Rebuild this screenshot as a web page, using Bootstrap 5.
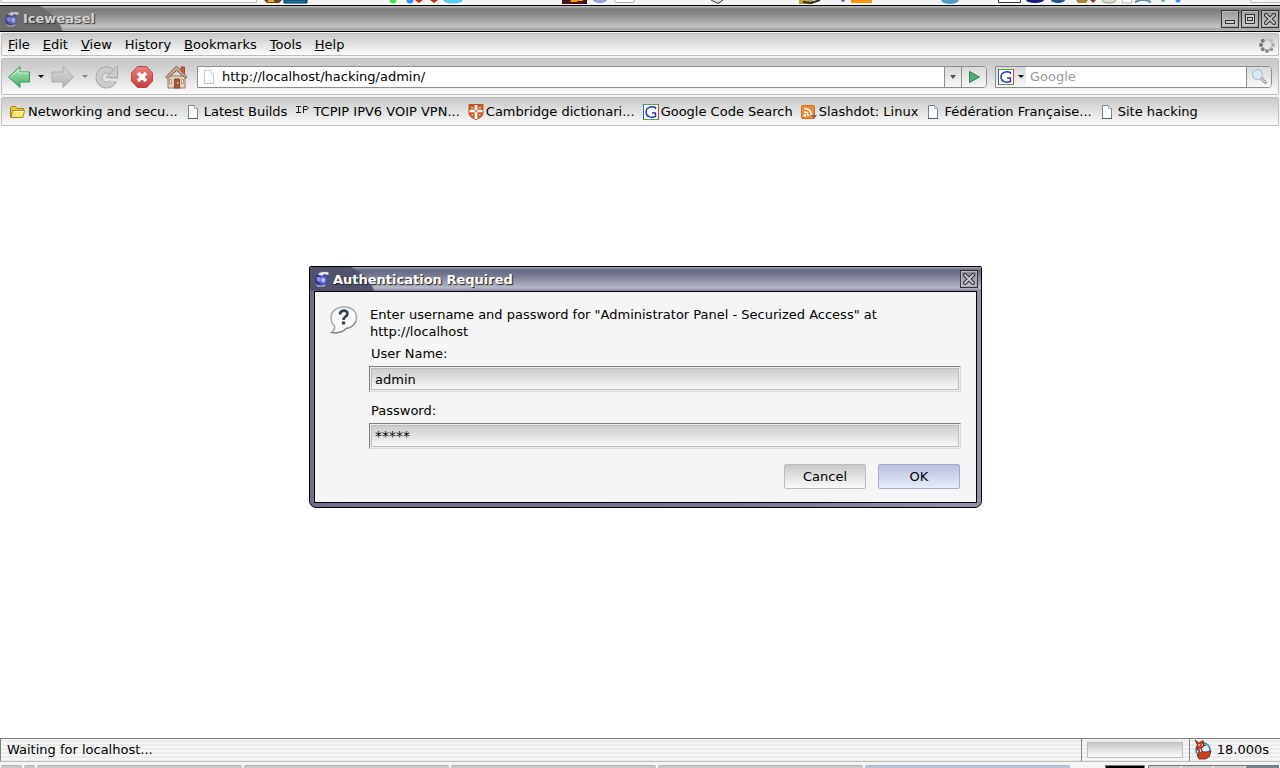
<!DOCTYPE html>
<html lang="en">
<head>
<meta charset="utf-8">
<meta name="viewport" content="width=device-width, initial-scale=1">
<title>Iceweasel</title>
<link href="https://cdn.jsdelivr.net/npm/bootstrap@5.3.0/dist/css/bootstrap.min.css" rel="stylesheet">
<style>
:root { --silver: linear-gradient(#c9c9c9, #fbfbfb); --edge: #bdbdbd; }
body { font-family: "DejaVu Sans", sans-serif; font-size: 13px; line-height: 17px; color: #000; background: #fff; }
a, a:hover { color: inherit; text-decoration: none; }
button { padding: 0; border: 0; background: none; color: inherit; }
svg { display: block; flex: none; }
.desk-top { height: 5px; background: #f4f4f4; overflow: hidden; }
.win-title { height: 27px; border-top: 1px solid #000; border-bottom: 1px solid #000; padding: 0 1px 0 4px; gap: 3px;
  background: radial-gradient(ellipse 62px 40px at 2px 31px, #6c6c6c 97%, transparent 100%), linear-gradient(#c2c2c2 0, #7b7b7b 3px, #858585 7px, #c4c4c4 21px, #a2a2a2 23px, #bcbcbc 100%);
  color: #d2d2d2; font-weight: bold; text-shadow: 1px 1px 1px #333; }
.win-btn { width: 18px; height: 18px; border: 1px solid #333; background: linear-gradient(#999, #cdcdcd); box-shadow: inset 1px 1px #bbb, inset -1px -1px #aaa; }
.chrome-area { background: #f5f5f5; padding: 1px 1px 0; }
.tool-row { border: 1px solid var(--edge); border-radius: 2px; background: var(--silver); }
.menu-row { height: 23px; padding: 0 3px 0 6px; gap: 13px; margin-bottom: 2px; }
.nav-row { height: 37px; padding: 0 6px 0 5px; margin-bottom: 2px; background: linear-gradient(#cacaca, #cfcfcf 8px, #fbfbfb); }
.mark-row { height: 29px; padding: 0 7px; gap: 8px; }
.mark-row a { display: flex; align-items: center; gap: 2px; white-space: nowrap; }
.field-wrap { height: 22px; border: 1px solid #8c8c92; background: #fff; }
.field-wrap input { border: 0; outline: 0; background: transparent; padding: 0; height: 20px; min-width: 0; }
.field-wrap input::placeholder { color: #999; opacity: 1; }
.field-btn { height: 20px; background: linear-gradient(#d9d9d9, #f8f8f8); display: flex; align-items: center; justify-content: center; }
.line-start { border-left: 1px solid #8c8c92; }
.rounded-edge { border-radius: 0 4px 4px 0; overflow: hidden; }
.page-view { padding: 140px 0 0 11px; }
.auth-box { width: 673px; max-width: 100%; border: 1px solid #000; border-radius: 2px 2px 7px 7px; padding: 0 4px 4px; background: linear-gradient(90deg, #6f7089, #74758e 60%, #9192aa);  overflow: hidden; }
.auth-title { height: 24px; margin: 0 -4px; padding: 0 3px 0 4px; gap: 3px; color: #fff; font-weight: bold; text-shadow: 1px 1px 1px #222;
  background: radial-gradient(ellipse 64px 40px at 2px 31px, #51536d 97%, transparent 100%), linear-gradient(#a7a9b8 0, #666981 3px, #70738d 7px, #b8bac8 21px, #8a8ba8 23px, #8a8ba8 100%); }
.auth-title .win-btn { background: linear-gradient(#85869b, #c3c4cf); }
.auth-body { background: #f5f5f5; border: 1px solid #000; padding: 14px 15px 13px 15px; gap: 11px; }
.auth-body p { padding-left: 1px; }
.auth-body label { display: block; padding: 1px 0 0 2px; }
.auth-body label.next-label { padding-top: 10px; }
.auth-field { display: block; width: 100%; height: 26px; padding: 0 5px; border: 1px solid; border-color: #7d7d80 #dcdcdc #dcdcdc #7d7d80; outline: 0;
  background: var(--silver); box-shadow: inset 0 0 0 1px #eee, inset 0 0 0 2px #bcbcbc; color: #000; }
#pass { font-size: 14px; }
.auth-actions { gap: 12px; padding: 15px 1px 0 0; }
.push-btn { width: 82px; height: 25px; border: 1px solid #bcbcbc; border-radius: 2px; background: var(--silver); }
.push-btn.ok-btn { border-color: #a5abc9; background: linear-gradient(#b9c1de, #e6edfd); }
.status-row { height: 24px; border-bottom: 1px solid #bcbcbc; background: repeating-linear-gradient(#f6f6f6 0 2px, #ececec 2px 4px); }
.status-cell { border: 1px solid #808080; border-width: 1px 0 0 1px; height: 23px; padding: 0 6px 1px 6px; }
.load-cell { padding: 0 6px 0 5px; }
.timer-cell { padding: 0 11px 1px 4px; gap: 5px; }
.load-bar { width: 96px; height: 16px; border: 1px solid #bbb; background: var(--silver); }
.task-row { height: 6px; padding: 3px 0 0 1px; gap: 2px; background: #f5f5f5; overflow: hidden; }
.task-row button { height: 8px; width: 205px; border-radius: 2px; background: #c8c8c8; border-top: 1px solid #b4b4b4; }
</style>
</head>
<body class="d-flex flex-column vh-100 overflow-hidden">

<svg width="0" height="0" class="position-absolute">
  <defs>
    <linearGradient id="gr" x2="0" y2="1"><stop stop-color="#b5e8bd"/><stop offset="1" stop-color="#42ae69"/></linearGradient>
    <linearGradient id="gy" x2="0" y2="1"><stop stop-color="#dadada"/><stop offset="1" stop-color="#b2b2b2"/></linearGradient>
    <linearGradient id="rd" x2="0" y2="1"><stop stop-color="#e58683"/><stop offset="1" stop-color="#c9393c"/></linearGradient>
    <radialGradient id="gl" cx=".65" cy=".55"><stop stop-color="#b4bbff"/><stop offset=".5" stop-color="#5a62e0"/><stop offset="1" stop-color="#2a2c93"/></radialGradient>
    <symbol id="globe" viewBox="0 0 16 16">
      <circle cx="7" cy="8.500" r="6" fill="url(#gl)"/>
      <path d="M2.500 6l3 0 1 3-2 2-2-2zM8 7l3 0 0 4-1 1-2-2z" fill="#dfe2ff" opacity=".5"/>
      <path d="M4 4c1-3 4-3 6-3l4 0 1 2-2 1-3-1-2 2-2-1z" fill="#eef0f6" stroke="#888" stroke-width=".4"/>
      <path d="M2 13.500c3 1.500 7 1.500 10 0l-2 2H4z" fill="#eef0f6" stroke="#888" stroke-width=".4"/>
    </symbol>
    <symbol id="cross" viewBox="0 0 12 12">
      <path d="M2 2l8 8M10 2l-8 8" stroke="#333" stroke-width="4" stroke-linecap="round"/>
      <path d="M2 2l8 8M10 2l-8 8" stroke="#ccc" stroke-width="1.800" stroke-linecap="round"/>
    </symbol>
    <symbol id="sheet" viewBox="0 0 16 16">
      <path d="M2.500 1.500h6l3 3v10h-9z" fill="#fcfdfd" stroke="#76828e"/>
      <path d="M2 14.500h10" stroke="#536374"/><path d="M8.500 1.500v3h3" fill="#e7eaec" stroke="#a9b1b8"/>
    </symbol>
    <symbol id="gee" viewBox="0 0 16 16">
      <path fill="#fff" d="M0 0h16v16H0z"/><path d="M0 .5h16M0 15.500h16" stroke="#49ad3d"/><path d="M15.500 0v16" stroke="#d34135"/><path d="M.5 0v16" stroke="#2d5fe0"/>
      <path d="M12.500 5V3.500c-4.500-2-9.500 0-9.500 4.500 0 4.600 4.500 6.200 9.500 4.500V9H9" fill="none" stroke="#2338a8" stroke-width="1.400"/>
    </symbol>
  </defs>
</svg>

<div class="desk-top">
  <svg width="1280" height="5" viewBox="0 0 1280 5">
    <path d="M1 0v2.500h255.500V0M1251 0v2.500h29" fill="#fafafa" stroke="#b9b9b9"/>
    <path d="M264 0h18l-3 3h-12z" fill="#6a4a24"/><path d="M268 0h6v2h-6z" fill="#e0ac32"/>
    <path d="M284 0h23v3h-23z" fill="#167cba" stroke="#0b3049"/>
    <circle cx="393" cy="0" r="3.500" fill="#4be04e"/><circle cx="410" cy="0" r="3.500" fill="#3e8bf0"/>
    <path d="M415 0h8l-4 3zM430 0h8l-4 3z" fill="#c62c13"/>
    <ellipse cx="453" cy="0" rx="10" ry="3.500" fill="#5cc9f5"/>
    <path d="M562 0h25v4h-25z" fill="#491416"/><path d="M571 0h8l-2 2h-7zM577 0h6v1h-6z" fill="#ff9d1a"/>
    <ellipse cx="600" cy="0" rx="7" ry="3" fill="#9c9cd8"/><path d="M614.500 0l1 2.500h18l1-2.500" fill="#fff" stroke="#9fb5c8"/>
    <path d="M711 0l7 3.500 5-3.500" fill="#ddd" stroke="#333"/>
    <path d="M799 0h14v4h-14z" fill="#bda43b"/><path d="M803 2l8 1 9-3" stroke="#302e1c" stroke-width="2" fill="none"/>
    <circle cx="843" cy="0" r="2" fill="#8458b3"/><path d="M851 0h21v3h-21z" fill="#ff9408"/>
    <ellipse cx="950" cy="0" rx="9" ry="4" fill="#4f9dc0"/>
    <path d="M998.500 0v2.500h22V0" fill="#fff" stroke="#333"/>
    <ellipse cx="1035" cy="0" rx="9" ry="3" fill="#1c1b78"/><ellipse cx="1058" cy="0" rx="7" ry="3" fill="#285389"/>
    <path d="M1076 0h12l-2 3h-8z" fill="#aa863b"/><path d="M1090 0h6l-3 3z" fill="#963022"/>
    <ellipse cx="1109" cy="0" rx="7" ry="3" fill="#dcdccf" stroke="#999"/><path d="M1122.500 0v3h9V0" fill="#fff" stroke="#bbb"/>
    <path d="M1135 2l8-3 8 3" stroke="#5f8fb4" stroke-width="2" fill="none"/><circle cx="1163" cy="0" r="2" fill="#4abf71"/><circle cx="1178" cy="0" r="2.500" fill="#3d8bf0"/>
  </svg>
</div>

<header>
  <div class="win-title d-flex align-items-center">
    <svg width="16" height="16" opacity=".7"><use href="#globe"/></svg>
    <span class="flex-grow-1">Iceweasel</span>
    <div class="d-flex gap-2px" style="gap:2px">
      <button class="win-btn" aria-label="Minimize"><svg width="16" height="16"><rect x="3.500" y="9.500" width="9" height="3" fill="#ccc" stroke="#333"/></svg></button>
      <button class="win-btn" aria-label="Maximize"><svg width="16" height="16" fill="#ccc" stroke="#333"><rect x="3.500" y="3.500" width="9" height="9"/><rect x="5.500" y="6.500" width="5" height="3"/></svg></button>
      <button class="win-btn d-flex align-items-center justify-content-center" aria-label="Close"><svg width="12" height="12"><use href="#cross"/></svg></button>
    </div>
  </div>

  <div class="chrome-area">
    <nav class="tool-row menu-row d-flex align-items-center">
      <a href="#"><u>F</u>ile</a><a href="#"><u>E</u>dit</a><a href="#"><u>V</u>iew</a><a href="#">Hi<u>s</u>tory</a><a href="#"><u>B</u>ookmarks</a><a href="#"><u>T</u>ools</a><a href="#"><u>H</u>elp</a>
      <svg class="ms-auto" width="16" height="16"><circle cx="8" cy="2" r="2" fill="#c6c6c6"/><circle cx="12.200" cy="3.800" r="2" fill="#bcbcbc"/><circle cx="14" cy="8" r="2" fill="#aaa"/><circle cx="12.200" cy="12.200" r="2" fill="#999"/><circle cx="8" cy="14" r="2" fill="#8a8a8a"/><circle cx="3.800" cy="12.200" r="2" fill="#7c7c7c"/><circle cx="2" cy="8" r="2" fill="#707070"/><circle cx="3.800" cy="3.800" r="2" fill="#777"/></svg>
    </nav>

    <div class="tool-row nav-row d-flex align-items-center">
      <button aria-label="Back"><svg width="24" height="24"><path d="M1.500 12L13 1.500V7h9.500v10H13v5.500z" fill="url(#gr)" stroke="#3d9560"/><path d="M3.500 12l8.500-7.500V8h9.500" fill="none" stroke="#d2f3d5"/></svg></button>
      <button class="ms-1" aria-label="Back history"><svg width="12" height="8"><path d="M3 2h6L6 5z"/></svg></button>
      <button class="ms-1" aria-label="Forward" disabled><svg width="24" height="24"><path d="M22.500 12L12 1.500V7H1v10h11v5.500z" fill="url(#gy)" stroke="#aaa"/></svg></button>
      <button class="ms-1" aria-label="Forward history" disabled><svg width="12" height="8"><path d="M3 2h6L6 5z" fill="#888"/></svg></button>
      <button class="ms-1" aria-label="Reload" disabled><svg width="24" height="24"><circle cx="11.500" cy="12.500" r="7.500" fill="none" stroke="#acacac" stroke-width="7"/><circle cx="11.500" cy="12.500" r="7.500" fill="none" stroke="#cdcdcd" stroke-width="5"/><path d="M15 14h8v2h-8z" fill="#e4e4e4"/><path d="M22.500 1v11.500h-11l3-3.500z" fill="#ccc" stroke="#aaa"/></svg></button>
      <button class="ms-2 ps-1" aria-label="Stop"><svg width="22" height="24"><path d="M6.500 1.500h9l6 6.500v8l-6 6.500h-9L.5 16V8z" fill="url(#rd)" stroke="#bb4444"/><path d="M7 8l8 8M15 8l-8 8" stroke="#fff" stroke-width="3.500"/></svg></button>
      <button class="ms-2 ps-1" aria-label="Home"><svg width="24" height="24"><path d="M16 2h3.500v8H16z" fill="#c6593f" stroke="#934b3a"/><path d="M3 11h17v12H3z" fill="#e5d2bd" stroke="#967768"/><path d="M11.500 1L.7 12l2 1.500 9-8 9 8 1.500-1.500z" fill="#c6a394" stroke="#8b5e50"/><path d="M9.500 14h5v9h-5z" fill="#a8563f" stroke="#7c4737"/><path d="M4.500 14.500h2v4h-2zM16.500 14.500h2v4h-2z" fill="#fff8ea" stroke="#ab8e78"/><path d="M12.500 17h1v2h-1z" fill="#fe3"/></svg></button>
      <div class="field-wrap d-flex align-items-center flex-grow-1 rounded-edge ms-2">
        <svg class="ms-1" width="16" height="16" opacity=".4"><use href="#sheet"/></svg>
        <input class="flex-grow-1 ms-1" type="text" aria-label="Location" value="http://localhost/hacking/admin/">
        <button class="field-btn line-start" style="width:17px" aria-label="Show history"><svg width="8" height="6"><path d="M1 1h6L4 5z" fill="#555"/></svg></button>
        <button class="field-btn line-start" style="width:25px" aria-label="Go"><svg width="14" height="14"><path d="M2.500 1.500L12.500 7 2.500 12.500z" fill="#4fac70" stroke="#2d8350"/></svg></button>
      </div>
      <div class="field-wrap d-flex align-items-center rounded-edge ms-2" style="width:277px">
        <button class="field-btn" style="width:30px" aria-label="Search engine"><svg width="16" height="16"><use href="#gee"/></svg><svg class="ms-1" width="6" height="4"><path d="M0 0h6L3 3z"/></svg></button>
        <input class="flex-grow-1 ps-1 line-start" type="text" aria-label="Search" placeholder="Google">
        <button class="field-btn line-start" style="width:25px" aria-label="Search"><svg width="17" height="17"><path d="M9.500 9.500l6 6" stroke="#999" stroke-width="3"/><path d="M10 10l5 5" stroke="#eee"/><circle cx="6.500" cy="6.500" r="5" fill="#d5e9f6" stroke="#a4b4c0"/></svg></button>
      </div>
    </div>

    <nav class="tool-row mark-row d-flex align-items-center">
      <a href="#"><svg width="17" height="16"><path d="M1.500 13.500v-10l1-1h4l1.500 2h6.500v2" fill="#e9c63f" stroke="#a57d0b"/><path d="M3.500 6.500h12l-1.500 7h-12z" fill="#fae57b" stroke="#b68b0e"/><path d="M5 7.500h9.500" stroke="#fff5b8"/></svg>Networking and secu...</a>
      <a href="#"><svg width="16" height="16"><use href="#sheet"/></svg>Latest Builds</a>
      <a href="#"><svg width="16" height="16" fill="none" stroke="#111"><path d="M1 2.500h5M3.500 2.500v6M1 8.500h5M8.500 9V2.500h3.500l1 1v1l-1 1H8.500"/></svg>TCPIP IPV6 VOIP VPN...</a>
      <a href="#"><svg width="16" height="16"><path d="M1 .5h14v8.500c0 3-3 5-7 6.500-4-1.500-7-3.500-7-6.500z" fill="#c9582f" stroke="#b4512f"/><path d="M8 1v14M1.500 7h13" stroke="#fff" stroke-width="2.600"/><path d="M3 3h2.500v1.500H3zM10.500 3H13v1.500h-2.500zM3.500 10h2v1.500h-2zM10.500 10h2v1.500h-2z" fill="#f4c746"/><path d="M8 5.500v3M6.500 7h3" stroke="#cc5b38"/></svg>Cambridge dictionari...</a>
      <a href="#"><svg width="16" height="16"><use href="#gee"/></svg>Google Code Search</a>
      <a href="#"><svg width="16" height="16"><rect x=".5" y="1.500" width="13" height="13" rx="1.500" fill="#f18a35" stroke="#d26c1d"/><path d="M3 8c3 0 4 1 4 4M3 4.500c5 0 7.500 2.500 7.500 7.500" fill="none" stroke="#fff" stroke-width="1.700"/><circle cx="3.800" cy="11.300" r="1.300" fill="#fff"/><path d="M10 11h6l-3 4z" fill="#666"/></svg>Slashdot: Linux</a>
      <a href="#"><svg width="16" height="16"><use href="#sheet"/></svg>Fédération Française...</a>
      <a href="#"><svg width="16" height="16"><use href="#sheet"/></svg>Site hacking</a>
    </nav>
  </div>
</header>

<main class="page-view flex-grow-1 d-flex justify-content-center align-items-start">
  <form class="auth-box" role="dialog" aria-labelledby="auth-name" onsubmit="return false">
    <div class="auth-title d-flex align-items-center">
      <svg width="16" height="16"><use href="#globe"/></svg>
      <span id="auth-name" class="flex-grow-1">Authentication Required</span>
      <button type="button" class="win-btn d-flex align-items-center justify-content-center" aria-label="Close"><svg width="12" height="12"><use href="#cross"/></svg></button>
    </div>
    <div class="auth-body d-flex">
      <svg width="28" height="28"><path d="M14 1c8 0 12.500 4.500 12.500 10.500S22 22 16 22.500c-2 3-7 5-14.500 4C4 25 5 23 4.500 20 2 18 1 15 1 11.500 1 6 6 1 14 1z" fill="#fafafa" stroke="#a4a8ab" stroke-width="1.500"/><path d="M1.500 26.500c6 1 11-.5 14.500-4 5-.5 8-3 10-7" fill="none" stroke="#6f7b84"/><path d="M10 8.500c0-5 7.500-5 7.500-1 0 3-4 3-4 6.500" fill="none" stroke="#2d4556" stroke-width="2.700"/><circle cx="13.500" cy="17" r="1.800" fill="#2d4556"/></svg>
      <div class="flex-grow-1">
        <p class="mb-1">Enter username and password for "Administrator Panel - Securized Access" at<br>http://localhost</p>
        <label class="mb-1" for="user">User Name:</label>
        <input class="auth-field" id="user" type="text" value="admin">
        <label class="mb-1 next-label" for="pass">Password:</label>
        <input class="auth-field" id="pass" type="text" autocomplete="off" value="*****">
        <div class="auth-actions d-flex justify-content-end">
          <button type="button" class="push-btn">Cancel</button>
          <button type="submit" class="push-btn ok-btn">OK</button>
        </div>
      </div>
    </div>
  </form>
</main>

<footer>
  <div class="status-row d-flex">
    <div class="status-cell flex-grow-1 d-flex align-items-center">Waiting for localhost...</div>
    <div class="status-cell load-cell d-flex align-items-center"><div class="load-bar" role="progressbar" aria-label="Loading"></div></div>
    <div class="status-cell timer-cell d-flex align-items-center">
      <svg width="18" height="20"><circle cx="9" cy="10" r="7" fill="#e8f1f8" stroke="#4c8fc4" stroke-width="1.800"/><path d="M1 0l4 3 4-2.500 1 5-2.500 3 .5 3 3 .5 4-.5 2-1-1.500 6-4 2.500H5l-1.500-3L5 11.500 2.500 8.500 3.500 5z" fill="#cb4420" stroke="#58200f" stroke-width=".8"/><path d="M4 5h2M7.500 5H9M6 9l1 3" stroke="#fff"/><path d="M9 6l3-1" stroke="#222"/></svg>
      <span>18.000s</span>
    </div>
  </div>
  <div class="task-row d-flex">
    <button style="width:21px" aria-label="Menu"><svg width="20" height="4"><path d="M5 3l2-2h2l2 2z" fill="#7d551d"/></svg></button>
    <button style="width:11px" aria-label="Show desktop"></button>
    <button aria-label="Task 1"></button><button aria-label="Task 2"></button><button aria-label="Task 3"></button><button aria-label="Task 4"></button>
    <button style="background:#b9c1de" aria-label="Task 5"></button>
    <svg class="ms-auto" width="175" height="4"><path d="M.5 4V.5h39V4" stroke="#777" fill="#000"/><path d="M43.500 4V.5h130V4" fill="#ccc" stroke="#777"/><path d="M141 1h32v3h-32z" fill="#758394"/><path d="M76 1v3M108 1v3M140 1v3" stroke="#fff"/></svg>
  </div>
</footer>
<script src="https://cdn.jsdelivr.net/npm/bootstrap@5.3.0/dist/js/bootstrap.bundle.min.js"></script>
</body>
</html>
